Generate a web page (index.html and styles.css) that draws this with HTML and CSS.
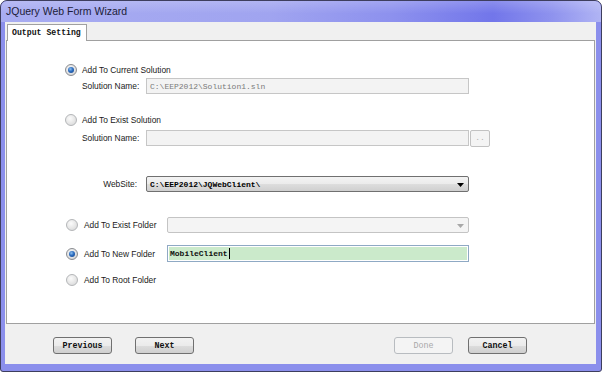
FILE: index.html
```html
<!DOCTYPE html>
<html>
<head>
<meta charset="utf-8">
<link rel="stylesheet" href="styles.css">
</head>
<body>
<div class="window">
  <div class="titlebar">JQuery Web Form Wizard</div>
  <div class="client">
    <div class="tabstrip"><div class="tab">Output Setting</div></div>
    <div class="panel">
      <div class="row r1 opt-a"><span class="radio on"></span><span class="lbl">Add To Current Solution</span></div>
      <div class="row r2 field"><span class="flabel">Solution Name:</span><div class="input dis w-long">C:\EEP2012\Solution1.sln</div></div>
      <div class="row r3 opt-a"><span class="radio"></span><span class="lbl">Add To Exist Solution</span></div>
      <div class="row r4 field"><span class="flabel">Solution Name:</span><div class="input dis w-long"></div><div class="browse">..</div></div>
      <div class="row r5 field"><span class="flabel right">WebSite:</span><div class="select w-long"><span class="val">C:\EEP2012\JQWebClient\</span><svg class="arrow" width="7" height="4" viewBox="0 0 7 4"><path d="M0 0H7L3.5 4Z" fill="#000"/></svg></div></div>
      <div class="row r6 opt-b"><span class="radio"></span><span class="lbl wide">Add To Exist Folder</span><div class="select dis w-short"><span class="val"></span><svg class="arrow" width="7" height="4" viewBox="0 0 7 4"><path d="M0 0H7L3.5 4Z" fill="#a8a8a8"/></svg></div></div>
      <div class="row r7 opt-b"><span class="radio on"></span><span class="lbl wide">Add To New Folder</span><div class="input focus w-short"><span class="gtext">MobileClient<span class="caret"></span></span></div></div>
      <div class="row r8 opt-b"><span class="radio"></span><span class="lbl wide">Add To Root Folder</span></div>
    </div>
    <div class="footer">
      <div class="btn">Previous</div>
      <div class="btn next">Next</div>
      <div class="btn done">Done</div>
      <div class="btn cancel">Cancel</div>
    </div>
  </div>
</div>
</body>
</html>
```

FILE: styles.css
```css
* { box-sizing: border-box; }
html, body { margin: 0; padding: 0; background: #fff; }
.window {
  width: 602px;
  height: 372px;
  border: 1px solid #3e3e5e;
  border-radius: 7px 7px 3px 3px;
  background: #8b8fec;
  padding: 0 5px 7px 4px;
  display: flex;
  flex-direction: column;
  overflow: hidden;
}
.titlebar {
  height: 21px;
  margin: 0 -5px 0 -4px;
  padding-left: 5px;
  padding-top: 4px;
  font-family: "Liberation Sans", Arial, sans-serif;
  font-size: 10.5px;
  color: #1c1c38;
  background:
    linear-gradient(180deg, rgba(255,255,255,0.18) 0%, rgba(255,255,255,0) 60%),
    linear-gradient(90deg, #a8acf1 0%, #a0a4f0 45%, #8d91ee 65%, #7276ea 82%, #8f93ee 92%, #b0b4f4 100%);
  border-radius: 6px 6px 0 0;
}
.client {
  flex: 1;
  background: #f0f0f0;
  display: flex;
  flex-direction: column;
}
.tabstrip {
  height: 18px;
  padding: 2px 0 0 2px;
  display: flex;
  align-items: flex-end;
}
.tab {
  position: relative;
  z-index: 1;
  width: 80px;
  height: 17px;
  margin-bottom: -1px;
  background: #fff;
  border: 1px solid #a0a0a0;
  border-bottom: none;
  font-family: "Liberation Mono", "Courier New", monospace;
  font-weight: bold;
  font-size: 8.2px;
  color: #111;
  padding: 3px 0 0 4px;
}
.panel {
  flex: 1;
  margin: 0 1px;
  border: 1px solid #a0a0a0;
  background: #fff;
  padding-top: 22px;
  display: flex;
  flex-direction: column;
  font-family: "Liberation Sans", Arial, sans-serif;
  font-size: 8.4px;
  color: #1a1a1a;
}
.row { display: flex; align-items: center; flex: none; }
.r1 { height: 14px; }
.r2 { height: 16px; margin-top: 1px; }
.r3 { height: 14px; margin-top: 19px; }
.r4 { height: 17px; margin-top: 3px; align-items: flex-start; }
.r5 { height: 16px; margin-top: 29px; }
.r6 { height: 16px; margin-top: 25px; }
.r7 { height: 17px; margin-top: 12px; }
.r8 { height: 14px; margin-top: 11px; }
.opt-a { padding-left: 58px; }
.opt-b { padding-left: 59px; }
.field { padding-left: 75px; }
.r4 .flabel { line-height: 16px; }
.radio {
  width: 12px;
  height: 12px;
  border-radius: 50%;
  border: 1px solid #b4b6b8;
  background: radial-gradient(circle at 40% 35%, #fbfbfb 0%, #e6e6e6 55%, #d2d3d5 100%);
  display: flex;
  align-items: center;
  justify-content: center;
  flex: none;
}
.radio.on {
  border-color: #8a8c90;
  background: radial-gradient(circle at 40% 35%, #f6f6f6 0%, #dedfe1 60%, #c4c6c9 100%);
}
.radio.on::after {
  content: "";
  width: 6px;
  height: 6px;
  border-radius: 50%;
  background: radial-gradient(circle at 40% 35%, #8fc0ee 0%, #2a6cc0 45%, #173f80 100%);
}
.lbl { margin-left: 5px; }
.lbl.wide { margin-left: 6px; width: 83px; flex: none; }
.flabel { width: 64px; flex: none; }
.flabel.right { text-align: right; padding-right: 9px; }
.w-long { width: 323px; }
.w-short { width: 302px; }
.input, .select {
  height: 16px;
  flex: none;
  display: flex;
  align-items: center;
  font-family: "Liberation Mono", "Courier New", monospace;
  font-size: 8px;
  padding-left: 3px;
}
.input.dis {
  background: #f3f3f3;
  border: 1px solid #c6c6c6;
  color: #7a7a7a;
}
.select {
  border: 1px solid #707070;
  border-radius: 2px;
  background: linear-gradient(180deg, #f3f3f3 0%, #ebebeb 50%, #dddddd 51%, #cfcfcf 100%);
  color: #000;
  justify-content: space-between;
  padding-right: 4px;
}
.select .val { font-weight: 600; }
.select.dis {
  border-color: #c4c4c4;
  background: #f4f4f4;
}
.arrow { flex: none; margin-top: 1px; }
.input.focus {
  height: 17px;
  border: 1px solid #8fa9c4;
  padding: 1px;
  background: #fff;
}
.gtext {
  flex: 1;
  height: 100%;
  background: #cbeacb;
  display: flex;
  align-items: center;
  font-weight: 600;
  color: #111;
  padding-left: 1px;
}
.caret {
  width: 1px;
  height: 11px;
  margin-left: 1px;
  background: #000;
  flex: none;
}
.browse {
  width: 20px;
  height: 17px;
  margin-left: 1px;
  border: 1px solid #c2c2c2;
  border-radius: 2px;
  background: #f4f4f4;
  color: #b0b0b0;
  font-family: "Liberation Mono", monospace;
  font-size: 8px;
  text-align: center;
  line-height: 14px;
}
.footer {
  height: 40px;
  flex: none;
  display: flex;
  align-items: flex-start;
  padding: 13px 0 0 48px;
}
.btn {
  width: 59px;
  height: 17px;
  border: 1px solid #707070;
  border-radius: 3px;
  background: linear-gradient(180deg, #f2f2f2 0%, #ebebeb 50%, #dddddd 51%, #cfcfcf 100%);
  font-family: "Liberation Mono", "Courier New", monospace;
  font-weight: bold;
  font-size: 8.4px;
  color: #111;
  display: flex;
  align-items: center;
  justify-content: center;
}
.btn.next { margin-left: 23px; }
.btn.done {
  margin-left: 200px;
  border-color: #b8bcc0;
  background: #f4f4f4;
  color: #a8a8a8;
  font-weight: normal;
}
.btn.cancel { margin-left: 15px; }
```
